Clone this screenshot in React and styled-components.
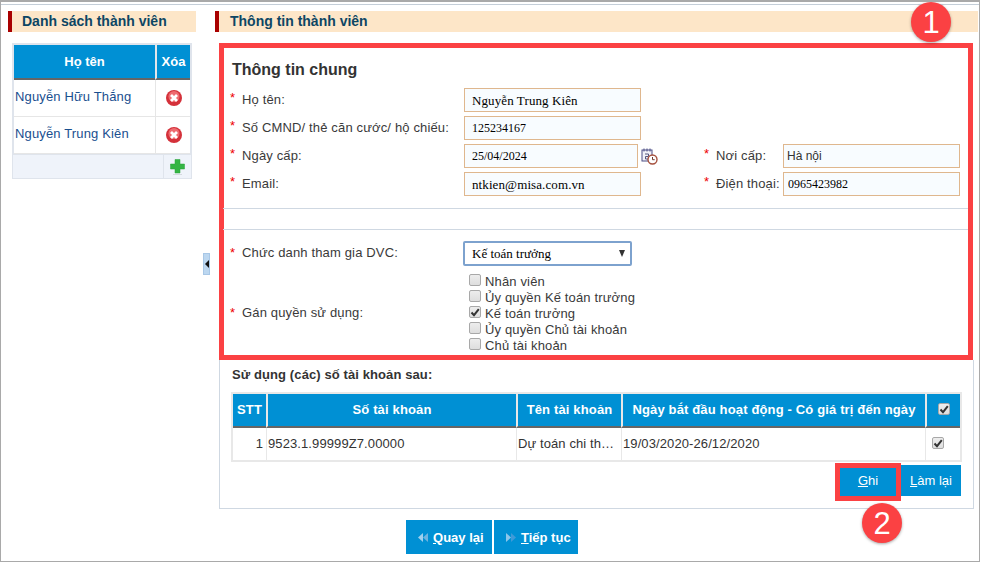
import React from 'react'
import styled, {createGlobalStyle} from 'styled-components'

const GlobalStyle = createGlobalStyle`
    html, body {
        margin: 0;
        padding: 0;
        background: #fff;
    }
    body {
        font-family: "Liberation Sans", Arial, sans-serif;
        color: #333;
    }
`

const members = [
    {id: 1, name: 'Nguyễn Hữu Thắng'},
    {id: 2, name: 'Nguyễn Trung Kiên'},
]

const roles = [
    {label: 'Nhân viên', checked: false},
    {label: 'Ủy quyền Kế toán trưởng', checked: false},
    {label: 'Kế toán trưởng', checked: true},
    {label: 'Ủy quyền Chủ tài khoản', checked: false},
    {label: 'Chủ tài khoản', checked: false},
]

const DeleteIcon = () => (
    <svg width="16" height="16" viewBox="0 0 16 16">
        <circle cx="8" cy="8" r="8" fill="#d4313a"/>
        <circle cx="8" cy="6.500" r="5.500" fill="#ee6b70"/>
        <path d="M5 5l6 6M11 5l-6 6" stroke="#fff" strokeWidth="2.800"/>
    </svg>
)

const PlusIcon = () => (
    <svg width="15" height="16" viewBox="0 0 15 16">
        <path d="M5 .5h5v4.500h4.500v5H10v4H5v-4H.5V5H5z" fill="#35b544" stroke="#2aa23a" strokeWidth=".5"/>
        <path d="M3 15.500h9" stroke="#d5d9df" strokeWidth="1"/>
    </svg>
)

const CalendarIcon = () => (
    <svg width="17" height="17" viewBox="0 0 17 17">
        <rect x="1" y="2" width="10" height="11" fill="#f1f2f8" stroke="#4d4f86"/>
        <path d="M3 .5v3M6 .5v3M9 .5v3" stroke="#4d4f86"/>
        <path d="M4 6h3.500v2.500H4.500V11H8" fill="none" stroke="#55577f"/>
        <circle cx="11.500" cy="11.500" r="4.500" fill="#fff" stroke="#a5503d" strokeWidth="1.400"/>
        <path d="M11.500 9v2.700h2.200" fill="none" stroke="#6f3a30"/>
    </svg>
)

const DoubleArrow = ({flip}) => (
    <ArrowSvg width="12" height="11" viewBox="0 0 12 11" $flip={flip}>
        <path d="M6 1v9L1 5.500z" fill={flip ? '#3f9ad8' : '#9fd0ee'}/>
        <path d="M11 1v9L6 5.500z" fill={flip ? '#8cc6ea' : '#6fb4e0'}/>
    </ArrowSvg>
)

const CheckMark = () => (
    <svg width="10" height="9" viewBox="0 0 10 9">
        <path d="M1.500 4.500l2.500 2.700 4.800-6" fill="none" stroke="#333" strokeWidth="2"/>
    </svg>
)

const Check = ({checked}) => (
    <CheckBox>{checked && <CheckMark/>}</CheckBox>
)

const Field = ({label, children, labelWidth}) => (
    <FieldRow>
        <Star>*</Star>
        <FieldLabel $width={labelWidth} $low>{label}</FieldLabel>
        {children}
    </FieldRow>
)

export default function App() {
    return (
        <Frame>
            <GlobalStyle/>
            <TopRule/>
            <Columns>
                <LeftColumn>
                    <SectionHeader>Danh sách thành viên</SectionHeader>
                    <MemberTable>
                        <thead>
                        <tr>
                            <MemberHead $width={141}>Họ tên</MemberHead>
                            <MemberHead>Xóa</MemberHead>
                        </tr>
                        </thead>
                        <tbody>
                        {members.map(({id, name}) => (
                            <tr key={id}>
                                <MemberCell>{name}</MemberCell>
                                <DeleteCell><DeleteIcon/></DeleteCell>
                            </tr>
                        ))}
                        </tbody>
                    </MemberTable>
                    <MemberFooter>
                        <AddCell><PlusIcon/></AddCell>
                    </MemberFooter>
                </LeftColumn>

                <Splitter><SplitterArrow/></Splitter>

                <RightColumn>
                    <SectionHeader $wide>Thông tin thành viên</SectionHeader>
                    <Badge $top={-9} $left={696}>1</Badge>
                    <Highlight>
                        <Title>Thông tin chung</Title>
                        <FormGrid>
                            <Field label="Họ tên:">
                                <TextInput defaultValue="Nguyễn Trung Kiên" $big readOnly/>
                            </Field>
                            <span/>
                            <Field label="Số CMND/ thẻ căn cước/ hộ chiếu:">
                                <TextInput defaultValue="125234167" readOnly/>
                            </Field>
                            <span/>
                            <Field label="Ngày cấp:">
                                <DateWrap>
                                    <TextInput defaultValue="25/04/2024" $short readOnly/>
                                    <CalendarSlot><CalendarIcon/></CalendarSlot>
                                </DateWrap>
                            </Field>
                            <Field label="Nơi cấp:" labelWidth={67}>
                                <TextInput defaultValue="Hà nội" $side $sans readOnly/>
                            </Field>
                            <Field label="Email:">
                                <TextInput defaultValue="ntkien@misa.com.vn" $big readOnly/>
                            </Field>
                            <Field label="Điện thoại:" labelWidth={67}>
                                <TextInput defaultValue="0965423982" $side readOnly/>
                            </Field>
                        </FormGrid>
                        <Dividers/>
                        <RoleRow>
                            <Star>*</Star>
                            <FieldLabel>Chức danh tham gia DVC:</FieldLabel>
                            <Select>
                                Kế toán trưởng
                                <SelectArrow/>
                            </Select>
                        </RoleRow>
                        <PermissionRow>
                            <Star>*</Star>
                            <FieldLabel>Gán quyền sử dụng:</FieldLabel>
                            <RoleList>
                                {roles.map(({label, checked}) => (
                                    <RoleItem key={label}>
                                        <Check checked={checked}/>
                                        {label}
                                    </RoleItem>
                                ))}
                            </RoleList>
                        </PermissionRow>
                    </Highlight>

                    <AccountPanel>
                        <AccountTitle>Sử dụng (các) số tài khoản sau:</AccountTitle>
                        <AccountTable>
                            <colgroup>
                                <col width="33"/>
                                <col width="250"/>
                                <col width="105"/>
                                <col width="304"/>
                                <col width="35"/>
                            </colgroup>
                            <thead>
                            <tr>
                                <AccountHead>STT</AccountHead>
                                <AccountHead>Số tài khoản</AccountHead>
                                <AccountHead>Tên tài khoản</AccountHead>
                                <AccountHead>Ngày bắt đầu hoạt động - Có giá trị đến ngày</AccountHead>
                                <AccountHead><Check checked/></AccountHead>
                            </tr>
                            </thead>
                            <tbody>
                            <tr>
                                <AccountCell $right>1</AccountCell>
                                <AccountCell>9523.1.99999Z7.00000</AccountCell>
                                <AccountCell>Dự toán chi th…</AccountCell>
                                <AccountCell>19/03/2020-26/12/2020</AccountCell>
                                <AccountCell $center><Check checked/></AccountCell>
                            </tr>
                            </tbody>
                        </AccountTable>
                        <ActionRow>
                            <SaveOutline>
                                <ActionButton $width={56}><u>G</u>hi</ActionButton>
                            </SaveOutline>
                            <ActionButton $width={60} $tall><u>L</u>àm lại</ActionButton>
                        </ActionRow>
                        <Badge $top={143} $left={642}>2</Badge>
                    </AccountPanel>

                    <NavRow>
                        <NavButton $width={86}><DoubleArrow/><span><u>Q</u>uay lại</span></NavButton>
                        <NavButton $width={84}><DoubleArrow flip/><span><u>T</u>iếp tục</span></NavButton>
                    </NavRow>
                </RightColumn>
            </Columns>
        </Frame>
    )
}

const ArrowSvg = styled.svg`
    flex: none;
    transform: ${props => props.$flip ? 'scaleX(-1)' : 'none'};
`

const Frame = styled.div`
    box-sizing: border-box;
    width: 980px;
    height: 562px;
    border: 1px solid #a9a9a9;
    border-top-width: 2px;
    overflow: hidden;
`

const TopRule = styled.div`
    height: 1px;
    margin-top: 2px;
    background: #c4ced8;
`

const Columns = styled.div`
    display: grid;
    grid-template-columns: 188px 19px 763px;
    margin: 6px 0 0 7px;
`

const LeftColumn = styled.div`
    display: flex;
    flex-direction: column;
`

const RightColumn = styled.div`
    position: relative;
    display: flex;
    flex-direction: column;
`

const SectionHeader = styled.div`
    box-sizing: border-box;
    height: 21px;
    padding-left: ${props => props.$wide ? '11px' : '10px'};
    border-left: 4px solid #a90000;
    background: #fde6c8;
    color: #0d4664;
    font-size: 14px;
    font-weight: 700;
    line-height: 20px;
`

const MemberTable = styled.table`
    box-sizing: border-box;
    width: 180px;
    margin: 11px 0 0 4px;
    border-collapse: separate;
    border-spacing: 0;
    table-layout: fixed;
    border: 2px solid #dfe4ec;
    border-bottom: 0;
`

const MemberHead = styled.th`
    box-sizing: border-box;
    width: ${props => props.$width ? props.$width + 'px' : 'auto'};
    height: 35px;
    padding: 0;
    background: #0090d4;
    border-left: ${props => props.$width ? '0' : '2px solid #e3e6ea'};
    border-bottom: 2px solid #666;
    color: #fff;
    font-size: 13px;
    font-weight: 700;
    text-align: center;
`

const MemberCell = styled.td`
    box-sizing: border-box;
    height: 37px;
    padding: 0 0 3px 1px;
    border-bottom: 1px solid #e6e6e6;
    color: #1a4f8f;
    font-size: 13px;
    letter-spacing: .15px;
    white-space: nowrap;
`

const DeleteCell = styled.td`
    padding: 3px 0 0 1px;
    border-left: 1px solid #e6e6e6;
    border-bottom: 1px solid #e6e6e6;
    text-align: center;
    vertical-align: middle;
`

const MemberFooter = styled.div`
    box-sizing: border-box;
    display: flex;
    justify-content: flex-end;
    width: 180px;
    height: 25px;
    margin-left: 4px;
    border: 1px solid #dfe4ec;
    background: #eff3fa;
`

const AddCell = styled.div`
    display: flex;
    align-items: center;
    justify-content: center;
    width: 27px;
    border-left: 1px solid #dfe4ec;
`

const Splitter = styled.div`
    box-sizing: border-box;
    display: flex;
    align-items: center;
    justify-content: center;
    align-self: start;
    width: 7px;
    height: 22px;
    margin: 242px 0 0 7px;
    background: #bcd7f0;
    border: 1px solid #a8c7e6;
`

const SplitterArrow = styled.span`
    width: 0;
    height: 0;
    border-top: 4px solid transparent;
    border-bottom: 4px solid transparent;
    border-right: 4px solid #111;
`

const Badge = styled.div`
    position: absolute;
    top: ${props => props.$top}px;
    left: ${props => props.$left}px;
    z-index: 2;
    display: flex;
    align-items: center;
    justify-content: center;
    width: 40px;
    height: 40px;
    border-radius: 50%;
    background: #fb4143;
    box-shadow: 0 1px 3px rgba(0, 0, 0, .35);
    color: #fff;
    font-size: 31px;
    line-height: 1;
`

const Highlight = styled.section`
    box-sizing: border-box;
    width: 754px;
    height: 317px;
    margin: 11px 0 0 4px;
    padding: 12px 0 0 7px;
    border: 5px solid #fb4143;
`

const Title = styled.h2`
    margin: 0 0 9px 1px;
    color: #333;
    font-size: 16px;
    font-weight: 700;
    line-height: 19px;
`

const FormGrid = styled.div`
    display: grid;
    grid-template-columns: 474px 1fr;
    row-gap: 4px;
`

const FieldRow = styled.div`
    display: flex;
    align-items: flex-start;
    height: 24px;
`

const Star = styled.span`
    width: 11px;
    flex: none;
    margin-left: -1px;
    margin-right: 1px;
    color: #e00;
    font-size: 13px;
    line-height: 20px;
`

const FieldLabel = styled.span`
    flex: none;
    width: ${props => props.$width ? props.$width + 'px' : '222px'};
    padding-top: ${props => props.$low ? '2px' : '0'};
    color: #3a3a3a;
    font-size: 13px;
    letter-spacing: .15px;
    line-height: 20px;
    white-space: nowrap;
`

const TextInput = styled.input`
    box-sizing: border-box;
    width: ${props => props.$short ? '174px' : '177px'};
    height: 24px;
    padding: ${props => props.$sans ? '0 3px' : props.$side ? '1px 4px 0' : '1px 7px 0'};
    border: 1px solid #dfb78e;
    border-radius: 0;
    outline: 0;
    background: #f8fcff;
    color: ${props => props.$sans ? '#333' : '#000'};
    font-family: ${props => props.$sans ? '"Liberation Sans", Arial, sans-serif' : '"Liberation Serif", "Times New Roman", serif'};
    font-size: ${props => props.$big ? '13px' : '12px'};
    letter-spacing: ${props => props.$big ? '.1px' : '0'};
`

const DateWrap = styled.div`
    display: flex;
    align-items: center;
`

const CalendarSlot = styled.span`
    display: flex;
    margin: 0 0 0 3px;
`

const Dividers = styled.div`
    box-sizing: border-box;
    height: 22px;
    margin: 12px 0 10px -8px;
    border-top: 1px solid #cfd8e2;
    border-bottom: 1px solid #cfd8e2;
`

const RoleRow = styled.div`
    display: flex;
    align-items: center;
    height: 26px;
`

const Select = styled.div`
    box-sizing: border-box;
    position: relative;
    width: 169px;
    height: 25px;
    margin-left: -1px;
    padding-left: 7px;
    border: 2px solid #7da2ce;
    border-radius: 2px;
    color: #000;
    font-family: "Liberation Serif", "Times New Roman", serif;
    font-size: 13px;
    line-height: 22px;
`

const SelectArrow = styled.span`
    position: absolute;
    top: 7px;
    right: 5px;
    width: 0;
    height: 0;
    border-left: 3.5px solid transparent;
    border-right: 3.5px solid transparent;
    border-top: 7px solid #333;
`

const PermissionRow = styled.div`
    display: flex;
    align-items: center;
    margin-top: 7px;
`

const RoleList = styled.div`
    display: flex;
    flex-direction: column;
    margin-left: 5px;
`

const RoleItem = styled.div`
    display: flex;
    align-items: center;
    gap: 4px;
    height: 16px;
    color: #3a3a3a;
    font-size: 13px;
    letter-spacing: .15px;
    white-space: nowrap;
`

const CheckBox = styled.span`
    box-sizing: border-box;
    flex: none;
    display: inline-flex;
    align-items: center;
    justify-content: center;
    width: 12px;
    height: 12px;
    margin-top: -2px;
    border: 1px solid #a8a8a8;
    border-radius: 2px;
    background: linear-gradient(#ededed, #dedede);
`

const AccountPanel = styled.section`
    position: relative;
    box-sizing: border-box;
    width: 755px;
    height: 149px;
    margin-left: 4px;
    padding: 7px 12px 0;
    border: 1px solid #cfd8e2;
    border-top: 0;
`

const AccountTitle = styled.div`
    color: #333;
    font-size: 13px;
    font-weight: 700;
    letter-spacing: .1px;
    line-height: 15px;
`

const AccountTable = styled.table`
    box-sizing: border-box;
    width: 731px;
    margin: 10px 0 0 -1px;
    border-collapse: separate;
    border-spacing: 0;
    table-layout: fixed;
    border: 2px solid #e8e8e8;
`

const AccountHead = styled.th`
    box-sizing: border-box;
    height: 34px;
    padding: 0 0 2px;
    background: #0090d4;
    border-left: 2px solid #e8e8e8;
    border-bottom: 2px solid #666;
    color: #fff;
    font-size: 13px;
    font-weight: 700;
    letter-spacing: .15px;
    text-align: center;
    white-space: nowrap;
    &:first-child {
        border-left: 0;
    }
`

const AccountCell = styled.td`
    box-sizing: border-box;
    height: 32px;
    padding: ${props => props.$right ? '0 3px 2px 0' : props.$center ? '0 11px 2px 0' : '0 1px 2px'};
    border-left: 1px solid #e8e8e8;
    color: #333;
    font-size: 13px;
    letter-spacing: .1px;
    text-align: ${props => props.$right ? 'right' : props.$center ? 'center' : 'left'};
    white-space: nowrap;
    &:first-child {
        border-left: 0;
    }
`

const ActionRow = styled.div`
    display: flex;
    align-items: flex-start;
    justify-content: flex-end;
    margin-top: 1px;
`

const SaveOutline = styled.div`
    border: 5px solid #fb4143;
`

const ActionButton = styled.div`
    box-sizing: border-box;
    display: flex;
    align-items: center;
    justify-content: center;
    width: ${props => props.$width}px;
    height: ${props => props.$tall ? '31px' : '28px'};
    margin-top: ${props => props.$tall ? '2px' : '0'};
    padding-bottom: ${props => props.$tall ? '0' : '3px'};
    background: #0090d4;
    color: #fff;
    font-size: 13px;
`

const NavRow = styled.div`
    display: flex;
    gap: 2px;
    margin: 11px 0 0 191px;
`

const NavButton = styled.div`
    box-sizing: border-box;
    display: flex;
    align-items: center;
    gap: 4px;
    width: ${props => props.$width}px;
    height: 34px;
    padding-left: 11px;
    background: #0090d4;
    color: #fff;
    font-size: 13px;
    font-weight: 700;
`
